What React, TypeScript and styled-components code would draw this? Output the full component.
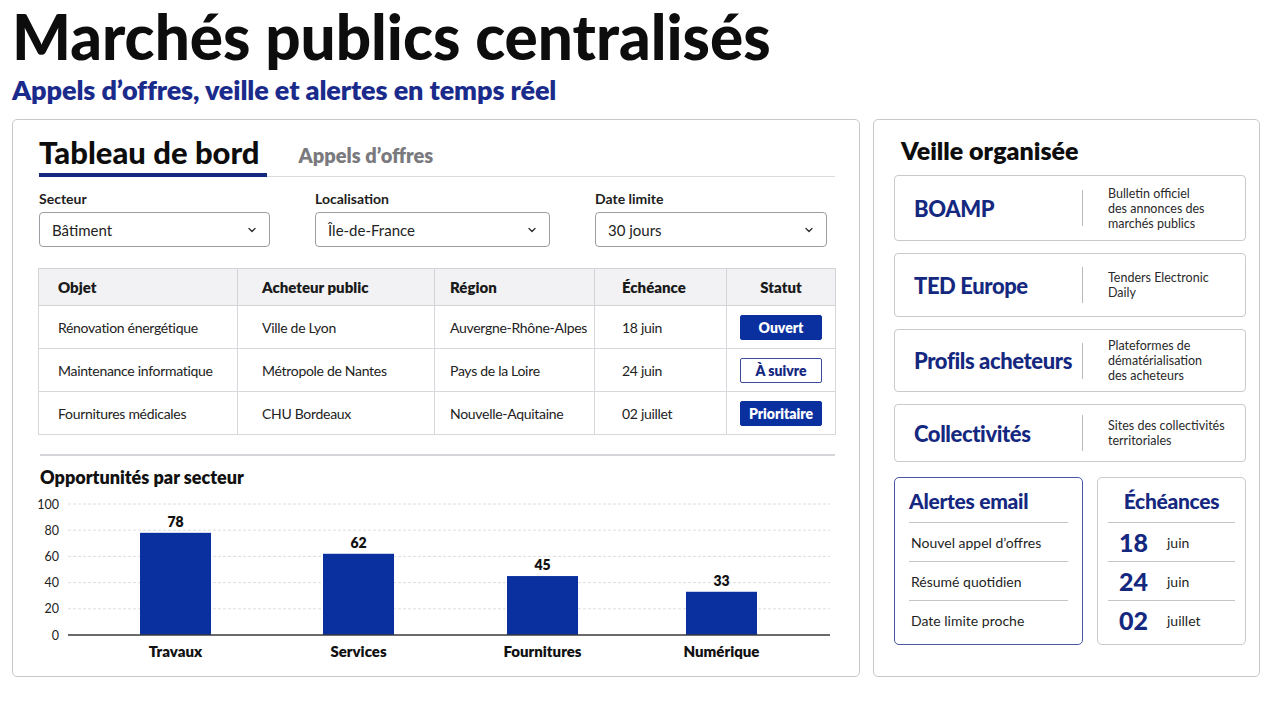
import React from "react";
import styled, { createGlobalStyle } from "styled-components";

const GlobalStyle = createGlobalStyle`
  html, body { margin: 0; padding: 0; background: #ffffff; }
  body { font-family: Lato, "Noto Sans", Arial, sans-serif; color: #1c1c1c; }
  * { box-sizing: border-box; }
`;

const NAVY = "#15287f";
const BLUE = "#0a2f9f";

const Page = styled.div`
  width: 1280px;
  height: 702px;
  padding: 5px 21px 0 12px;
  overflow: hidden;
`;

const Title = styled.h1`
  margin: 0;
  font-size: 62px;
  line-height: 62px;
  font-weight: 900;
  letter-spacing: 0;
  color: #0d0d0d;
`;

const Subtitle = styled.h2`
  margin: 7px 0 0;
  font-size: 27px;
  line-height: 32px;
  font-weight: 800;
  letter-spacing: -0.1px;
  color: #1a2b8c;
`;

const Columns = styled.div`
  margin-top: 13px;
  display: grid;
  grid-template-columns: 848px 387px;
  column-gap: 13px;
  height: 558px;
`;

const Panel = styled.section`
  border: 1px solid #c9c9cc;
  border-radius: 5px;
  background: #fff;
`;

const MainPanel = styled(Panel)`
  padding: 14px 24px 0 26px;
`;

const SidePanel = styled(Panel)`
  padding: 10px 13px 0 20px;
`;

const Tabs = styled.div`
  display: flex;
  align-items: flex-end;
  gap: 32px;
  border-bottom: 1px solid #dcdce0;
  height: 43px;
`;

const Tab = styled.div<{ $active?: boolean }>`
  font-weight: ${(p) => (p.$active ? 900 : 800)};
  font-size: ${(p) => (p.$active ? "31px" : "20px")};
  color: ${(p) => (p.$active ? "#0d0d0d" : "#7a7a7e")};
  padding: 0 7px ${(p) => (p.$active ? "5px" : "8px")} 0;
  border-bottom: ${(p) => (p.$active ? `4px solid ${NAVY}` : "4px solid transparent")};
  margin-bottom: -1px;
  line-height: 1;
`;

const Filters = styled.div`
  margin-top: 13px;
  display: grid;
  grid-template-columns: 231px 235px 232px;
  column-gap: 45px;
`;

const Field = styled.label`
  display: flex;
  flex-direction: column;
  gap: 5px;
`;

const FieldLabel = styled.span`
  font-size: 14px;
  font-weight: 700;
  color: #1c1c1c;
`;

const Select = styled.div`
  height: 35px;
  border: 1px solid #9c9ca2;
  border-radius: 4px;
  display: flex;
  align-items: center;
  justify-content: space-between;
  padding: 0 12px 0 12px;
  font-size: 15px;
  color: #222;
`;

const Table = styled.table`
  margin-top: 21px;
  width: 797px;
  margin-left: -1px;
  border-collapse: collapse;
  font-size: 14px;
  letter-spacing: -0.3px;
  table-layout: fixed;
`;

const Th = styled.th<{ $center?: boolean; $pad?: number }>`
  background: #f2f2f4;
  border: 1px solid #d4d4d8;
  height: 37px;
  text-align: ${(p) => (p.$center ? "center" : "left")};
  padding: 0 0 0 ${(p) => p.$pad ?? 0}px;
  font-weight: 800;
  font-size: 15px;
  letter-spacing: 0;
  color: #1a1a1a;
`;

const Td = styled.td<{ $center?: boolean; $pad?: number }>`
  border: 1px solid #d8d8dc;
  height: 43px;
  padding: 0 0 0 ${(p) => p.$pad ?? 0}px;
  text-align: ${(p) => (p.$center ? "center" : "left")};
  color: #222;
  white-space: nowrap;
`;

const Badge = styled.span<{ $outline?: boolean }>`
  display: flex;
  margin: 0 auto;
  align-items: center;
  justify-content: center;
  width: 82px;
  height: 25px;
  border-radius: 2px;
  font-size: 14px;
  font-weight: 800;
  letter-spacing: 0;
  background: ${(p) => (p.$outline ? "#fff" : BLUE)};
  color: ${(p) => (p.$outline ? NAVY : "#fff")};
  border: 1px solid ${(p) => (p.$outline ? "#3b4a9c" : BLUE)};
`;

const Divider = styled.hr`
  margin: 19px 0 0 1px;
  border: 0;
  border-top: 2px solid #d6d6da;
`;

const ChartTitle = styled.h3`
  margin: 10px 0 0 1px;
  font-size: 18px;
  font-weight: 800;
  color: #111;
`;

const ChartSvg = styled.svg`
  display: block;
  margin-top: 8px;
  margin-left: -1px;
  font-family: Lato, "Noto Sans", Arial, sans-serif;
`;

const SideTitle = styled.h3`
  margin: 4px 0 0 7px;
  font-size: 25px;
  font-weight: 800;
  color: #0d0d0d;
  line-height: 32px;
`;

const Sources = styled.div`
  margin-top: 9px;
  display: flex;
  flex-direction: column;
  gap: 12px;
  width: 352px;
`;

const SourceCard = styled.div<{ $h: number }>`
  height: ${(p) => p.$h}px;
  border: 1px solid #c9c9ce;
  border-radius: 4px;
  display: grid;
  grid-template-columns: 187px 1px 1fr;
  align-items: center;
`;

const SourceName = styled.div`
  padding-left: 19px;
  font-size: 22px;
  font-weight: 900;
  color: ${NAVY};
  letter-spacing: -0.4px;
  white-space: nowrap;
`;

const VRule = styled.div`
  width: 1px;
  height: 36px;
  background: #b9b9be;
`;

const SourceDesc = styled.div`
  padding-left: 25px;
  font-size: 12.5px;
  line-height: 15px;
  color: #2a2a2a;
`;

const Bottom = styled.div`
  margin-top: 15px;
  display: grid;
  grid-template-columns: 189px 149px;
  column-gap: 14px;
`;

const Box = styled.div<{ $accent?: boolean; $inset: number }>`
  height: 168px;
  border: 1px solid ${(p) => (p.$accent ? "#4a57a3" : "#c9c9ce")};
  border-radius: 5px;
  padding: 0 ${(p) => p.$inset}px;
`;

const BoxTitle = styled.div<{ $center?: boolean }>`
  height: 44px;
  display: flex;
  align-items: center;
  justify-content: ${(p) => (p.$center ? "center" : "flex-start")};
  font-size: 21px;
  font-weight: 900;
  color: ${NAVY};
  letter-spacing: -0.3px;
`;

const Item = styled.div`
  height: 39px;
  border-top: 1px solid #c4c4c8;
  display: flex;
  align-items: center;
  padding-left: 2px;
  font-size: 14px;
  color: #1e1e1e;
`;

const DateItem = styled(Item)`
  padding-left: 11px;
  gap: 18px;
`;

const DayNum = styled.span`
  width: 30px;
  font-size: 25px;
  font-weight: 900;
  color: ${NAVY};
`;

const Chevron = () => (
  <svg width="10" height="10" viewBox="0 0 10 10" fill="none">
    <path d="M2 3.5 L5 6.5 L8 3.5" stroke="#333" strokeWidth="1.4" strokeLinecap="round" strokeLinejoin="round" />
  </svg>
);

const rows = [
  { objet: "Rénovation énergétique", acheteur: "Ville de Lyon", region: "Auvergne-Rhône-Alpes", date: "18 juin", statut: "Ouvert", outline: false },
  { objet: "Maintenance informatique", acheteur: "Métropole de Nantes", region: "Pays de la Loire", date: "24 juin", statut: "À suivre", outline: true },
  { objet: "Fournitures médicales", acheteur: "CHU Bordeaux", region: "Nouvelle-Aquitaine", date: "02 juillet", statut: "Prioritaire", outline: false },
];

const pads = [19, 24, 15, 27];

const bars = [
  { label: "Travaux", value: 78, x: 102 },
  { label: "Services", value: 62, x: 285 },
  { label: "Fournitures", value: 45, x: 469 },
  { label: "Numérique", value: 33, x: 648 },
];

const sources = [
  { name: "BOAMP", h: 66, desc: ["Bulletin officiel", "des annonces des", "marchés publics"] },
  { name: "TED Europe", h: 64, desc: ["Tenders Electronic", "Daily"] },
  { name: "Profils acheteurs", h: 63, desc: ["Plateformes de", "dématérialisation", "des acheteurs"] },
  { name: "Collectivités", h: 58, desc: ["Sites des collectivités", "territoriales"] },
];

const BASE = 139;
const SCALE = 1.31;

function BarChart() {
  return (
    <ChartSvg width="797" height="166" viewBox="0 0 797 166">
      {[0, 20, 40, 60, 80, 100].map((t) => {
        const y = BASE - t * SCALE;
        return (
          <g key={t}>
            <text x="21" y={y + 4.5} textAnchor="end" fontSize="12.5" fill="#222">
              {t}
            </text>
            {t > 0 && <line x1="30" x2="792" y1={y} y2={y} stroke="#dedee2" strokeDasharray="3 2" />}
          </g>
        );
      })}
      {bars.map((b) => {
        const h = b.value * SCALE;
        const cx = b.x + 35.5;
        return (
          <g key={b.label}>
            <rect x={b.x} y={BASE - h} width="71" height={h} fill={BLUE} />
            <text x={cx} y={BASE - h - 6} textAnchor="middle" fontSize="14" fontWeight="800" fill="#111">
              {b.value}
            </text>
            <text x={cx} y={BASE + 22} textAnchor="middle" fontSize="15" fontWeight="800" fill="#111">
              {b.label}
            </text>
          </g>
        );
      })}
      <line x1="30" x2="792" y1={BASE} y2={BASE} stroke="#3a3a3e" strokeWidth="1.5" />
    </ChartSvg>
  );
}

export default function App() {
  return (
    <>
      <GlobalStyle />
      <Page>
        <Title>Marchés publics centralisés</Title>
        <Subtitle>Appels d’offres, veille et alertes en temps réel</Subtitle>
        <Columns>
          <MainPanel>
            <Tabs>
              <Tab $active>Tableau de bord</Tab>
              <Tab>Appels d’offres</Tab>
            </Tabs>
            <Filters>
              <Field>
                <FieldLabel>Secteur</FieldLabel>
                <Select>
                  Bâtiment <Chevron />
                </Select>
              </Field>
              <Field>
                <FieldLabel>Localisation</FieldLabel>
                <Select>
                  Île-de-France <Chevron />
                </Select>
              </Field>
              <Field>
                <FieldLabel>Date limite</FieldLabel>
                <Select>
                  30 jours <Chevron />
                </Select>
              </Field>
            </Filters>
            <Table>
              <colgroup>
                <col style={{ width: 199 }} />
                <col style={{ width: 197 }} />
                <col style={{ width: 160 }} />
                <col style={{ width: 132 }} />
                <col style={{ width: 109 }} />
              </colgroup>
              <thead>
                <tr>
                  <Th $pad={pads[0]}>Objet</Th>
                  <Th $pad={pads[1]}>Acheteur public</Th>
                  <Th $pad={pads[2]}>Région</Th>
                  <Th $pad={pads[3]}>Échéance</Th>
                  <Th $center>Statut</Th>
                </tr>
              </thead>
              <tbody>
                {rows.map((r) => (
                  <tr key={r.objet}>
                    <Td $pad={pads[0]}>{r.objet}</Td>
                    <Td $pad={pads[1]}>{r.acheteur}</Td>
                    <Td $pad={pads[2]}>{r.region}</Td>
                    <Td $pad={pads[3]}>{r.date}</Td>
                    <Td $center>
                      <Badge $outline={r.outline}>{r.statut}</Badge>
                    </Td>
                  </tr>
                ))}
              </tbody>
            </Table>
            <Divider />
            <ChartTitle>Opportunités par secteur</ChartTitle>
            <BarChart />
          </MainPanel>
          <SidePanel>
            <SideTitle>Veille organisée</SideTitle>
            <Sources>
              {sources.map((s) => (
                <SourceCard key={s.name} $h={s.h}>
                  <SourceName>{s.name}</SourceName>
                  <VRule />
                  <SourceDesc>
                    {s.desc.map((d) => (
                      <div key={d}>{d}</div>
                    ))}
                  </SourceDesc>
                </SourceCard>
              ))}
            </Sources>
            <Bottom>
              <Box $accent $inset={14}>
                <BoxTitle>Alertes email</BoxTitle>
                <Item>Nouvel appel d’offres</Item>
                <Item>Résumé quotidien</Item>
                <Item>Date limite proche</Item>
              </Box>
              <Box $inset={10}>
                <BoxTitle $center>Échéances</BoxTitle>
                <DateItem>
                  <DayNum>18</DayNum>juin
                </DateItem>
                <DateItem>
                  <DayNum>24</DayNum>juin
                </DateItem>
                <DateItem>
                  <DayNum>02</DayNum>juillet
                </DateItem>
              </Box>
            </Bottom>
          </SidePanel>
        </Columns>
      </Page>
    </>
  );
}
